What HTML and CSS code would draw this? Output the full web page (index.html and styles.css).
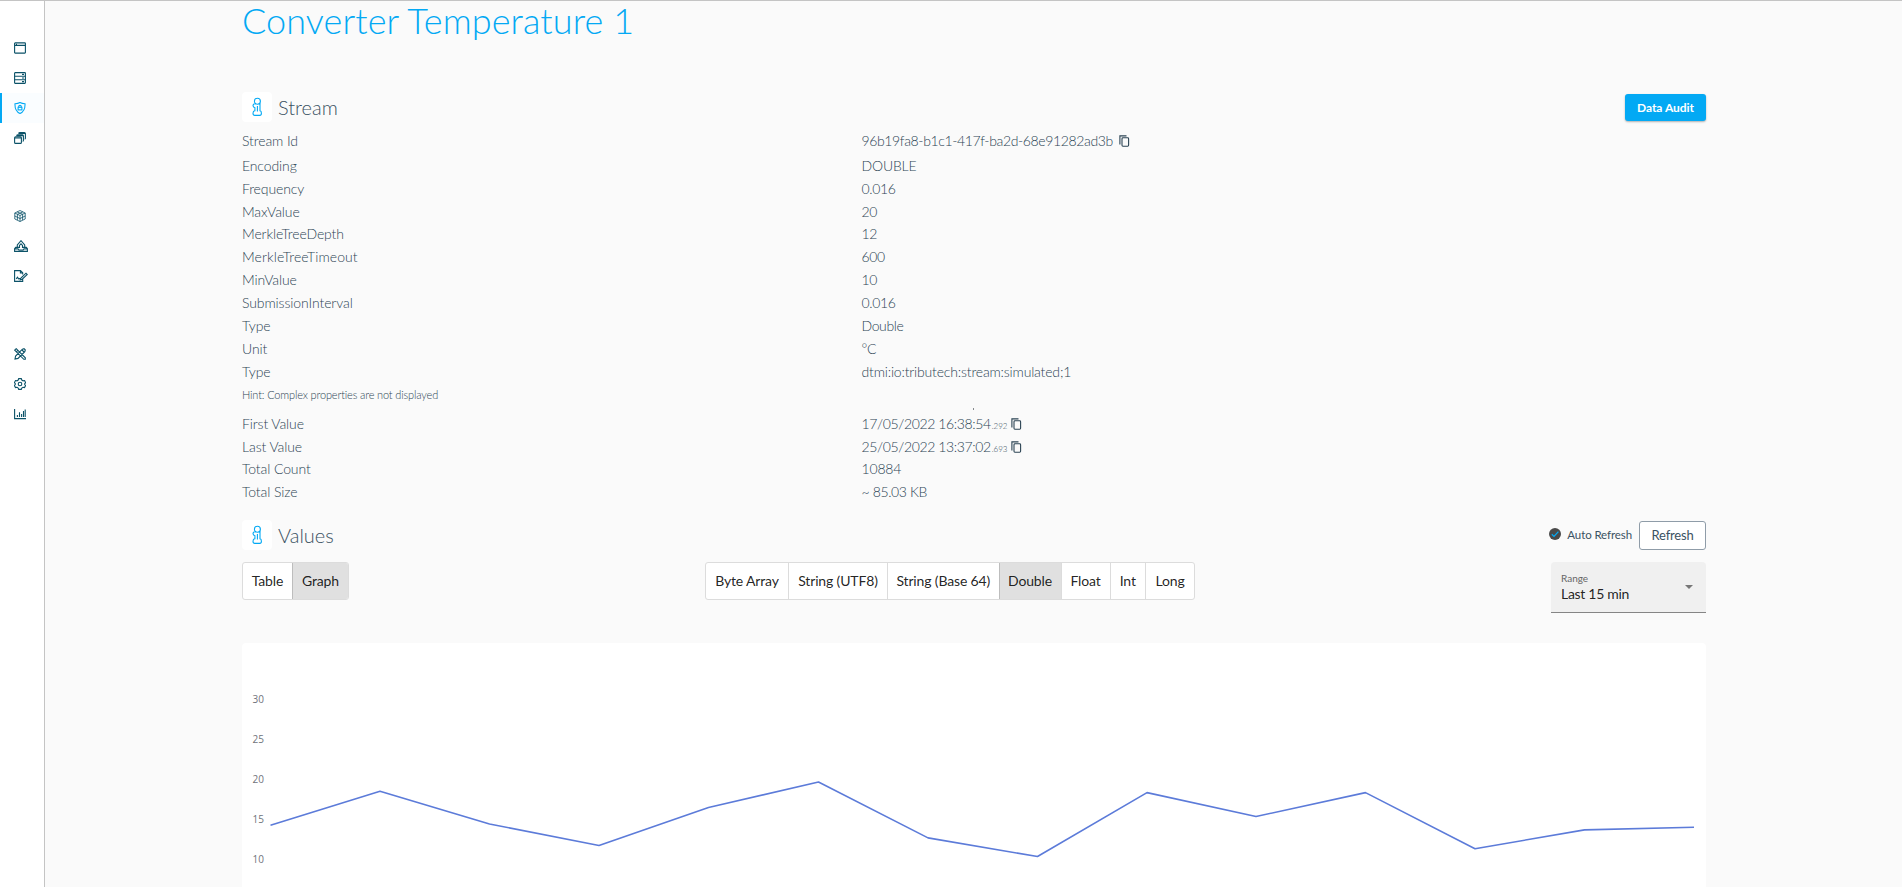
FILE: index.html
```html
<!DOCTYPE html>
<html lang="en">
<head>
<meta charset="utf-8">
<title>Converter Temperature 1</title>
<link rel="stylesheet" href="styles.css">
</head>
<body>
<svg width="0" height="0" class="defs">
  <symbol id="info" viewBox="0 0 12 20">
    <circle cx="6.4" cy="4.2" r="3"/>
    <path d="M4.6 6.7Q2 6.7 2 8.6Q2 10.4 3.9 10.8V13.8Q2 14 2 16.2Q2 18.4 3.8 18.4H8.8Q10.4 18.4 10.4 16.2Q10.4 14 9 13.8V6.9H8M6.4 9V14.4"/>
  </symbol>
  <symbol id="copy" viewBox="0 0 12 13">
    <path d="M.9 9.5V.9H7.5"/>
    <rect x="3" y="2.8" width="6.6" height="8.4" rx=".9"/>
  </symbol>
</svg>
<div class="app">
  <nav class="sidebar">
    <div class="group">
      <a class="item"><svg viewBox="0 0 12 12"><rect x=".6" y=".9" width="10.8" height="10.2" rx=".6"/><path d="M.6 3.4H11.4M2 2.2H3"/></svg></a>
      <a class="item"><svg viewBox="0 0 12 12"><rect x=".6" y=".6" width="10.8" height="10.8" rx=".6"/><path d="M.6 4.2H11.4M.6 7.8H11.4M8 2.4H10M8 6H10M8 9.6H10"/></svg></a>
      <a class="item active"><svg viewBox="0 0 12 12"><path d="M6 .5Q8 1.7 11 1.7Q11.4 8.9 6 11.5Q.6 8.9 1 1.7Q4 1.7 6 .5Z"/><rect x="4.1" y="5.3" width="3.8" height="2.6"/><path d="M4.7 5.3V4.6Q4.7 3.4 6 3.4T7.3 4.6V5.3"/></svg></a>
      <a class="item"><svg viewBox="0 0 12 12"><rect x=".6" y="4.9" width="6.8" height="6.5" rx="1"/><path d="M.6 6H7.4M2.6 3.8Q2.6 2.8 3.6 2.8H8.4Q9.4 2.8 9.4 3.8V8.4Q9.4 9.2 8.6 9.2M4.6 1.6Q4.6.6 5.6.6H10.4Q11.4.6 11.4 1.6V6.2Q11.4 7 10.6 7M2.6 3.6H9.2M4.6 1.4H11.2"/></svg></a>
    </div>
    <div class="group">
      <a class="item thin"><svg viewBox="0 0 12 12"><path d="M6 .5 11.2 3V9L6 11.5.8 9V3ZM.8 3 6 5.5 11.2 3M6 5.5V11.5M3.2 1.9 8.6 4.3V10M8.8 1.9 3.4 4.3V10M.8 6 6 8.5 11.2 6"/></svg></a>
      <a class="item wide"><svg viewBox="0 0 14 12"><path d="M3.2 7.4H1.7L.6 8.7V11.4H13.4V8.7L12.3 7.4H10.8M.6 8.9H4L4.9 10H9.1L10 8.9H13.4M5.4 7.4H3.3V5L7 .7 10.7 5V7.4H8.6M5.5 8V5.4L7 3.9 8.5 5.4V8"/></svg></a>
      <a class="item wide"><svg viewBox="0 0 14 12"><path d="M8.7 9.2V11.4H.6V.6H6.5L8.7 2.8V4.5M6.4.8V3H8.6M2.2 8.8 3.5 7.2 4.5 8.8 6.8 8.2 12 3.2 13.3 4.5 8.2 9.2 6.3 9.7 6.8 8.2"/></svg></a>
    </div>
    <div class="group">
      <a class="item"><svg viewBox="0 0 12 12"><path d="M.7 2.2 2.2.7 11.3 9.8V11.3H9.8ZM2.3 3.8 3.8 2.3M8.4 1.2 10 .7 11.3 2 10.8 3.6 4 10.4 1 11 1.6 8ZM8 2 10 4"/></svg></a>
      <a class="item"><svg viewBox="0 0 12 12"><path d="M4.7.6H7.3L7.8 2.1 9.1 2.8 10.6 2.5 11.6 4.6 10.7 5.8V6.6L11.6 7.6 10.5 9.6 9 9.3 7.8 10 7.3 11.4H4.7L4.2 10 3 9.3 1.5 9.6.4 7.6 1.3 6.4V5.6L.4 4.6 1.5 2.5 3 2.8 4.2 2.1Z"/><circle cx="6" cy="6" r="1.8"/></svg></a>
      <a class="item"><svg viewBox="0 0 12 12"><path d="M.6 1V10.6H12M3.4 9V7M5.5 9V4.2M7.6 9V6M9.5 9V3M11.2 9V1.5"/></svg></a>
    </div>
  </nav>
  <main class="content">
    <h1>Converter Temperature 1</h1>
    <header class="section stream">
      <span class="badge"><svg><use href="#info"/></svg></span>
      <h2>Stream</h2>
      <button class="primary">Data Audit</button>
    </header>
    <dl class="details">
      <div class="first"><dt>Stream Id</dt><dd>96b19fa8-b1c1-417f-ba2d-68e91282ad3b<svg class="copy far"><use href="#copy"/></svg></dd></div>
      <div><dt>Encoding</dt><dd class="text">DOUBLE</dd></div>
      <div><dt>Frequency</dt><dd>0.016</dd></div>
      <div><dt>MaxValue</dt><dd>20</dd></div>
      <div><dt>MerkleTreeDepth</dt><dd>12</dd></div>
      <div><dt class="loose">MerkleTreeTimeout</dt><dd>600</dd></div>
      <div><dt>MinValue</dt><dd>10</dd></div>
      <div><dt>SubmissionInterval</dt><dd>0.016</dd></div>
      <div><dt>Type</dt><dd>Double</dd></div>
      <div><dt>Unit</dt><dd>°C</dd></div>
      <div><dt>Type</dt><dd class="text">dtmi:io:tributech:stream:simulated;1</dd></div>
    </dl>
    <div class="hint"><span>Hint: Complex properties are not displayed</span><i class="speck"></i></div>
    <dl class="details">
      <div><dt>First Value</dt><dd>17/05/2022 16:38:54<small>.292</small><svg class="copy"><use href="#copy"/></svg></dd></div>
      <div><dt>Last Value</dt><dd>25/05/2022 13:37:02<small>.693</small><svg class="copy"><use href="#copy"/></svg></dd></div>
      <div><dt>Total Count</dt><dd class="text">10884</dd></div>
      <div><dt>Total Size</dt><dd>~ 85.03 KB</dd></div>
    </dl>
    <header class="section values">
      <span class="badge"><svg><use href="#info"/></svg></span>
      <h2>Values</h2>
      <label class="auto"><svg viewBox="0 0 12 12"><circle cx="6" cy="6" r="6"/><path d="M2.8 6.3 5 8.4 9.4 3.6"/></svg>Auto Refresh</label>
      <button class="outline">Refresh</button>
    </header>
    <div class="controls">
      <div class="toggle view"><span>Table</span><span class="on">Graph</span></div>
      <div class="toggle format"><span>Byte Array</span><span>String (UTF8)</span><span>String (Base 64)</span><span class="on">Double</span><span>Float</span><span>Int</span><span>Long</span></div>
      <div class="select"><div><small>Range</small><b>Last 15 min</b></div><i class="arrow"></i></div>
    </div>
    <div class="chart">
      <svg width="1464" height="244" viewBox="242 643 1464 244">
        <g class="axis">
          <text x="264" y="702.5">30</text>
          <text x="264" y="742.5">25</text>
          <text x="264" y="782.5">20</text>
          <text x="264" y="822.5">15</text>
          <text x="264" y="862.5">10</text>
        </g>
        <polyline class="line" points="270.5,825.3 380,791.3 489.5,824 599,845.5 708.5,807.5 818.5,782 928,837.9 1037.5,856.5 1147,792.6 1256,816.5 1365.5,792.6 1475,848.7 1584.5,829.9 1694,827.2"/>
      </svg>
    </div>
  </main>
</div>
</body>
</html>
```
FILE: styles.css
```css
* { box-sizing: border-box; }
body {
  margin: 0;
  height: 887px;
  overflow: hidden;
  background: #fafafa;
  color: #3b5262;
  font-family: Lato, sans-serif;
  font-size: 14px;
}
.defs { position: absolute; }
.app { display: flex; height: 887px; border-top: 1px solid #c4c4c4; }
svg { fill: none; stroke: currentColor; flex: none; }
h1, h2, dl, dt, dd { margin: 0; }

.sidebar {
  flex: none;
  width: 45px;
  padding-top: 32px;
  display: flex;
  flex-direction: column;
  gap: 48px;
  background: #fff;
  border-right: 1px solid #c4c4c4;
  color: #0b5268;
}
.item { display: flex; align-items: center; height: 30px; padding-left: 14px; }
.item svg { width: 12px; height: 12px; stroke-width: 1.1; }
.item.wide svg { width: 14px; }
.item.thin svg { stroke-width: .8; }
.item.active { padding-left: 12px; border-left: 2px solid #03a9f4; background: #fafdff; color: #03a9f4; }

.content { width: 1464px; margin-left: 197px; }
h1 { height: 91px; font-size: 36px; line-height: 38px; font-weight: 300; letter-spacing: .1px; color: #03a9f4; white-space: nowrap; }
.section { display: flex; align-items: center; height: 30px; }
.badge { width: 30px; height: 30px; margin-right: 6px; display: grid; place-items: center; background: #fff; border-radius: 4px; color: #03a9f4; }
.badge svg { width: 12px; height: 20px; stroke-width: 1.1; }
h2 { font-size: 20px; font-weight: 300; line-height: 30px; margin-right: auto; }
button { font: inherit; padding: 0; }
.primary { width: 81px; height: 27px; border: 0; border-radius: 3px; background: #03a9f4; color: #fff; font-size: 12px; font-weight: 700; letter-spacing: -.05px; box-shadow: 0 1px 2px rgba(0,0,0,.3); }
.outline { width: 67px; height: 29px; margin: 1px 0 0 7px; border: 1px solid #8f9ca8; border-radius: 3px; background: #fff; color: #3b5262; font-size: 13px; letter-spacing: -.2px; }

.details { font-weight: 300; color: #2c4454; }
.details div { display: grid; grid-template-columns: 619.5px 1fr; align-items: center; height: 22.85px; line-height: 22px; }
.details .first { height: 26.3px; margin-top: 6.2px; }
.details dt { letter-spacing: -.1px; }
.details .loose { letter-spacing: .1px; }
.details dd { display: flex; align-items: center; white-space: nowrap; letter-spacing: -.37px; }
.details .text { letter-spacing: -.17px; }
.details small { font-size: 8px; padding-top: 3px; margin-left: 1px; letter-spacing: -.1px; }
.copy { width: 12px; height: 13px; margin-left: 4px; stroke-width: 1.1; }
.copy.far { margin-left: 6px; }
.hint { display: flex; height: 29px; font-size: 11px; font-weight: 300; line-height: 24px; letter-spacing: -.15px; color: #2c4454; }
.hint span { width: 731px; }
.speck { width: 1px; height: 2px; margin-top: 25px; background: #85898c; }

.values { margin-top: 16.6px; }
.auto { display: flex; align-items: center; gap: 6px; margin-top: -1px; font-size: 11.5px; letter-spacing: -.1px; }
.auto svg { width: 12px; height: 12px; }
.auto circle { fill: #4a4a4a; stroke: none; }
.auto path { stroke: #03a9f4; stroke-width: 1.3; }

.controls { display: flex; align-items: flex-start; margin-top: 12px; height: 81px; }
.toggle { display: grid; height: 38px; border: 1px solid #dcdcdc; border-radius: 3px; background: #fff; overflow: hidden; color: rgba(0,0,0,.87); line-height: 36px; letter-spacing: -.15px; }
.toggle span { text-align: center; white-space: nowrap; }
.toggle span + span { border-left: 1px solid #dcdcdc; }
.toggle .on { background: #e0e0e0; border-left-color: #bdbdbd; }
.view { grid-template-columns: 49px 1fr; width: 107px; }
.format { grid-template-columns: 82px 99px 111.5px 62px 49px 35.5px 1fr; width: 490px; margin-left: 356px; }
.select { display: flex; align-items: center; justify-content: space-between; width: 155px; height: 51px; margin-left: auto; padding: 0 13px 0 10px; background: #f0f0f0; border-bottom: 1px solid #858585; border-radius: 4px 4px 0 0; }
.select div { display: grid; }
.select small { font-size: 10px; line-height: 14px; color: #666; }
.select b { font-weight: 400; line-height: 17px; letter-spacing: -.3px; color: rgba(0,0,0,.87); }
.arrow { border: 4px solid transparent; border-top-color: #777; border-bottom: 0; }

.chart { height: 244px; background: #fff; border-radius: 4px 4px 0 0; }
.chart svg { display: block; }
.axis text { fill: #70737b; stroke: none; font: 10px "Open Sans", sans-serif; text-anchor: end; }
.line { stroke: #5c7bd9; stroke-width: 1.6; stroke-linejoin: bevel; }
```
